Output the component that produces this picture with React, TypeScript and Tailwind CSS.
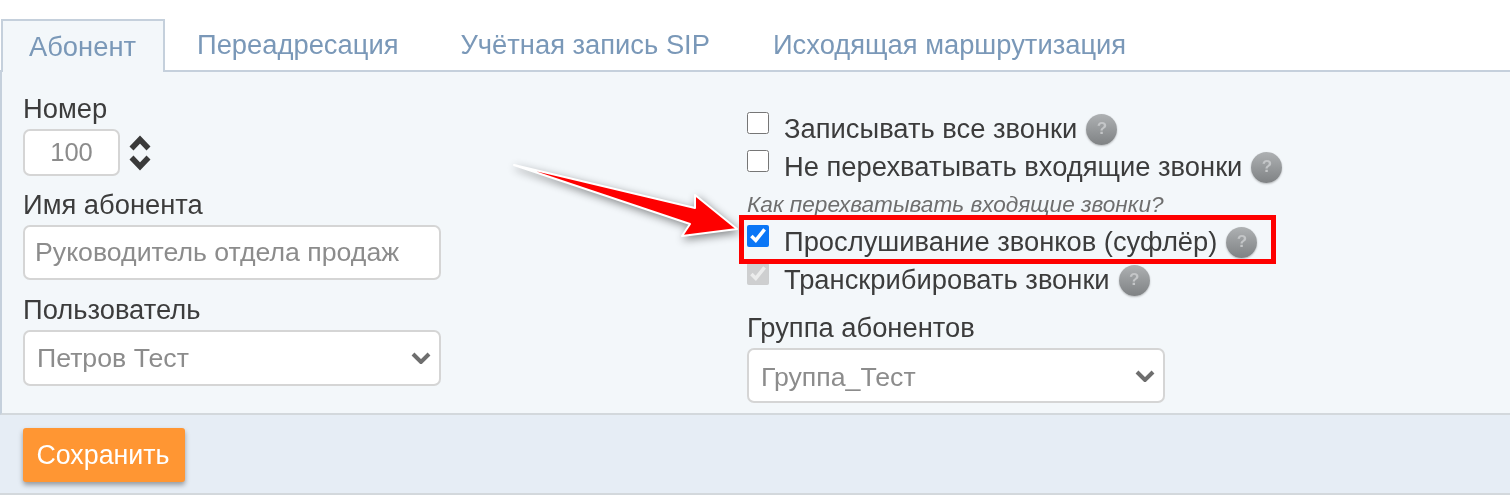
import { useState } from "react";

const font = "font-['Liberation_Sans',Arial,sans-serif]";

function Help() {
  return (
    <span className="ml-[9px] flex h-[31px] w-[31px] shrink-0 items-center justify-center rounded-full bg-gradient-to-b from-[#aeb1b3] to-[#7f8284] text-[17px] font-bold text-[#c4c6c8] shadow-[0_1px_2px_rgba(0,0,0,0.25)]">
      ?
    </span>
  );
}

function Chevron() {
  return (
    <svg viewBox="0 0 20 12" className="pointer-events-none absolute right-[8px] top-1/2 h-[12px] w-[20px] -translate-y-1/2" fill="none" stroke="#6e6e6e" strokeWidth="4">
      <path d="M2 2l8 8 8-8" />
    </svg>
  );
}

function Check({ label, checked, disabled }: { label: string; checked?: boolean; disabled?: boolean }) {
  const [on, setOn] = useState(!!checked);
  return (
    <label className="flex h-[38px] items-center">
      <input
        type="checkbox"
        checked={on}
        disabled={disabled}
        onChange={(e) => setOn(e.target.checked)}
        className="mb-[12px] h-[22px] w-[22px] shrink-0 accent-[#0a76f6]"
      />
      <span className="ml-[15px] whitespace-nowrap pb-[2px]">{label}</span>
      <Help />
    </label>
  );
}

function Select({ value, className }: { value: string; className: string }) {
  return (
    <div className={`relative flex items-center rounded-[7px] border-2 border-[#d5d5d5] bg-white pl-[12px] text-[26.7px] text-[#8c8c8c] ${className}`}>
      {value}
      <Chevron />
    </div>
  );
}

export default function App() {
  return (
    <div className={`${font} relative h-[495px] w-[1510px] overflow-hidden bg-white pt-[19px] text-[27.35px] text-[#3c3c3c] blur-[0.5px]`}>
      {/* tabs */}
      <div className="flex h-[53px] border-b-2 border-[#c5d0dc] text-[27.35px] text-[#7a98b8]">
        <div className="z-10 ml-[1px] flex h-[53px] w-[164px] items-center justify-center border-2 border-b-0 border-[#c5d0dc] bg-[#f3f7fa] pr-[1px]">Абонент</div>
        <div className="ml-[32px] flex items-center">Переадресация</div>
        <div className="ml-[62px] flex items-center">Учётная запись SIP</div>
        <div className="ml-[63px] flex items-center">Исходящая маршрутизация</div>
      </div>

      {/* body */}
      <div className="flex h-[343px] border-b-2 border-l-2 border-[#d3d8dc] border-l-[#c5d0dc] bg-[#f3f7fa]">
        <div className="ml-[21px] flex w-[418px] flex-col">
          <div className="mt-[21px] h-[36px] leading-[32px]">Номер</div>
          <div className="flex items-center">
            <input
              readOnly
              value="100"
              className="h-[47px] w-[97px] rounded-[7px] border-2 border-[#d5d5d5] bg-white text-center text-[25.5px] text-[#8c8c8c]"
            />
            <svg viewBox="0 0 22 36" className="ml-[9px] h-[36px] w-[22px]" fill="none" stroke="#3a3a3a" strokeWidth="5.5">
              <path d="M2.5 13.5l8.5-9 8.5 9" />
              <path d="M2.5 22.5l8.5 9 8.5-9" />
            </svg>
          </div>
          <div className="mt-[14px] h-[35px] leading-[30px]">Имя абонента</div>
          <input
            readOnly
            placeholder="Руководитель отдела продаж"
            className="h-[55px] w-full rounded-[7px] border-2 border-[#d5d5d5] bg-white pl-[10px] text-[26.7px] placeholder:text-[#8c8c8c]"
          />
          <div className="mt-[15px] h-[35px] leading-[30px]">Пользователь</div>
          <Select value="Петров Тест" className="h-[56px] w-full" />
        </div>

        <div className="relative ml-[306px] flex flex-col pt-[38px]">
          <Check label="Записывать все звонки" />
          <Check label="Не перехватывать входящие звонки" />
          <div className="h-[37px] text-[22.6px] leading-[37px] text-[#6e6e6e] italic">Как перехватывать входящие звонки?</div>
          <Check label="Прослушивание звонков (суфлёр)" checked />
          <Check label="Транскрибировать звонки" checked disabled />
          <div className="mt-[14px] h-[36px] leading-[30px]">Группа абонентов</div>
          <Select value="Группа_Тест" className="-mt-[1px] h-[55px] w-[418px] pt-[3px]" />
        </div>
      </div>

      {/* footer */}
      <div className="h-[80px] border-b-2 border-[#d3d8dc] bg-[#e6edf5] pl-[23px] pt-[13px]">
        <button className="h-[54px] w-[162px] rounded-[3px] bg-[#ff9633] pr-[2px] text-[26.8px] text-white shadow-[0_3px_5px_rgba(0,0,0,0.35)]">Сохранить</button>
      </div>

      {/* red frame + arrow over the form */}
      <div className="absolute left-[739px] top-[215px] h-[49px] w-[537px] border-[5px] border-[#fe0000]" />
      <svg viewBox="0 0 1510 495" className="pointer-events-none absolute left-0 top-0 h-[495px] w-[1510px] drop-shadow-[2px_3px_4px_rgba(0,0,0,0.45)]">
        <path d="M514 165L695 208L695 195L737 229L682 236L690 224Z" fill="#fe0000" stroke="#fff" strokeWidth="2" strokeLinejoin="round" />
      </svg>
    </div>
  );
}
